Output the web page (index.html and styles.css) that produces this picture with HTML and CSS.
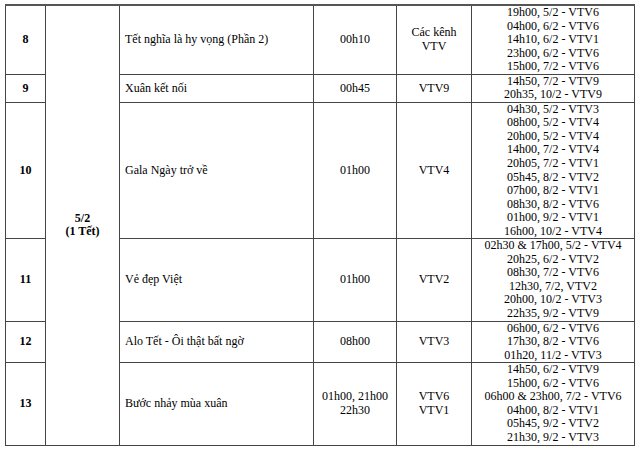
FILE: index.html
```html
<!DOCTYPE html>
<html lang="vi">
<head>
<meta charset="utf-8">
<link rel="stylesheet" href="styles.css">
</head>
<body>
<table class="schedule">
  <colgroup>
    <col class="c-no"><col class="c-date"><col class="c-title"><col class="c-time"><col class="c-ch"><col class="c-re">
  </colgroup>
  <tbody>
    <tr>
      <td class="no">8</td>
      <td class="date" rowspan="6">5/2<br>(1 Tết)</td>
      <td class="title">Tết nghĩa là hy vọng (Phần 2)</td>
      <td class="mid">00h10</td>
      <td class="mid">Các kênh<br>VTV</td>
      <td class="mid">19h00, 5/2 - VTV6<br>04h00, 6/2 - VTV6<br>14h10, 6/2 - VTV1<br>23h00, 6/2 - VTV6<br>15h00, 7/2 - VTV6</td>
    </tr>
    <tr>
      <td class="no">9</td>
      <td class="title">Xuân kết nối</td>
      <td class="mid">00h45</td>
      <td class="mid">VTV9</td>
      <td class="mid">14h50, 7/2 - VTV9<br>20h35, 10/2 - VTV9</td>
    </tr>
    <tr>
      <td class="no">10</td>
      <td class="title">Gala Ngày trở về</td>
      <td class="mid">01h00</td>
      <td class="mid">VTV4</td>
      <td class="mid">04h30, 5/2 - VTV3<br>08h00, 5/2 - VTV4<br>20h00, 5/2 - VTV4<br>14h00, 7/2 - VTV4<br>20h05, 7/2 - VTV1<br>05h45, 8/2 - VTV2<br>07h00, 8/2 - VTV1<br>08h30, 8/2 - VTV6<br>01h00, 9/2 - VTV1<br>16h00, 10/2 - VTV4</td>
    </tr>
    <tr>
      <td class="no">11</td>
      <td class="title">Vẻ đẹp Việt</td>
      <td class="mid">01h00</td>
      <td class="mid">VTV2</td>
      <td class="mid">02h30 &amp; 17h00, 5/2 - VTV4<br>20h25, 6/2 - VTV2<br>08h30, 7/2 - VTV6<br>12h30, 7/2, VTV2<br>20h00, 10/2 - VTV3<br>22h35, 9/2 - VTV9</td>
    </tr>
    <tr>
      <td class="no">12</td>
      <td class="title">Alo Tết - Ôi thật bất ngờ</td>
      <td class="mid">08h00</td>
      <td class="mid">VTV3</td>
      <td class="mid">06h00, 6/2 - VTV6<br>17h30, 8/2 - VTV6<br>01h20, 11/2 - VTV3</td>
    </tr>
    <tr>
      <td class="no">13</td>
      <td class="title">Bước nhảy mùa xuân</td>
      <td class="mid">01h00, 21h00<br>22h30</td>
      <td class="mid">VTV6<br>VTV1</td>
      <td class="mid">14h50, 6/2 - VTV9<br>15h00, 6/2 - VTV6<br>06h00 &amp; 23h00, 7/2 - VTV6<br>04h00, 8/2 - VTV1<br>05h45, 9/2 - VTV2<br>21h30, 9/2 - VTV3</td>
    </tr>
  </tbody>
</table>
</body>
</html>
```
FILE: styles.css
```css
html, body {
  margin: 0;
  padding: 0;
  background: #ffffff;
}
body {
  padding: 4px 0 0 5px;
  font-family: "Liberation Serif", "Times New Roman", serif;
  font-size: 12px;
  line-height: 13.55px;
  color: #000000;
}
.schedule {
  border-collapse: collapse;
  table-layout: fixed;
  width: 629px;
}
.c-no { width: 40px; }
.c-date { width: 74px; }
.c-title { width: 194px; }
.c-time { width: 83px; }
.c-ch { width: 75px; }
.c-re { width: 163px; }
.schedule td {
  border: 1px solid #444444;
  padding: 0;
  vertical-align: middle;
}
.schedule tr:first-child td {
  border-top: 2px solid #555555;
}
.no, .date {
  text-align: center;
  font-weight: bold;
}
.title {
  text-align: left;
  padding-left: 5px !important;
}
.mid {
  text-align: center;
  white-space: nowrap;
}
```
